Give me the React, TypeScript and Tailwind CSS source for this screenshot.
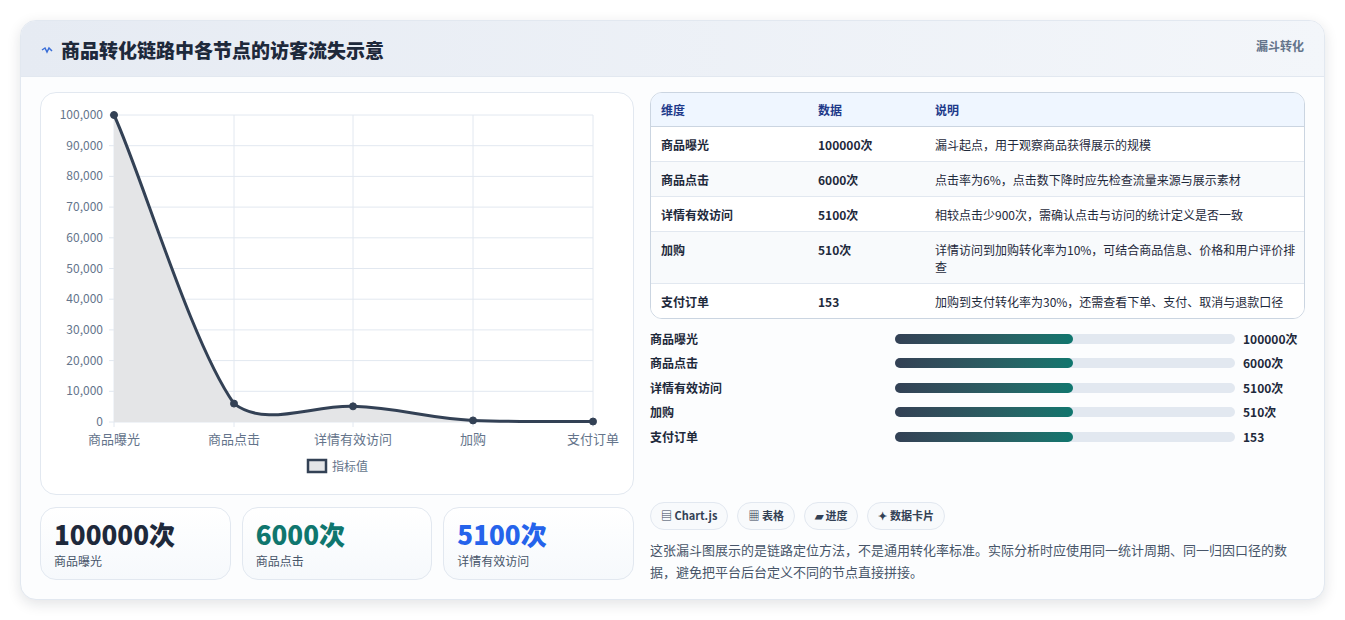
import React from 'react';

const font = { fontFamily: '"Noto Sans CJK SC", "Noto Sans", sans-serif' };

const rows = [
  { name: '商品曝光', value: '100000次', note: '漏斗起点，用于观察商品获得展示的规模' },
  { name: '商品点击', value: '6000次', note: '点击率为6%，点击数下降时应先检查流量来源与展示素材' },
  { name: '详情有效访问', value: '5100次', note: '相较点击少900次，需确认点击与访问的统计定义是否一致' },
  { name: '加购', value: '510次', note: '详情访问到加购转化率为10%，可结合商品信息、价格和用户评价排查' },
  { name: '支付订单', value: '153', note: '加购到支付转化率为30%，还需查看下单、支付、取消与退款口径' },
];

const xs = [73, 193, 312, 432, 552];
const yTicks = [100000, 90000, 80000, 70000, 60000, 50000, 40000, 30000, 20000, 10000, 0];
const yOf = (v: number) => 329 - (v / 100000) * 307;
const pts = [100000, 6000, 5100, 510, 153].map((v, i) => [xs[i], yOf(v)]);
const line =
  'M73,22 C100,80 150,250 193,310.6 C225,335 270,312 312,313.3 C360,315 385,325 432,327.4 C480,329 520,328.5 552,328.5';

function Chart() {
  return (
    <svg width="594" height="402" className="block">
      {yTicks.map((t) => (
        <g key={t}>
          <line x1="68" x2="552" y1={yOf(t)} y2={yOf(t)} stroke="#e2e8f0" />
          <text x="62" y={yOf(t) + 4} fontSize="12" fill="#64748b" textAnchor="end">
            {t.toLocaleString('en-US')}
          </text>
        </g>
      ))}
      {xs.map((x) => (
        <line key={x} x1={x} x2={x} y1="22" y2="334" stroke="#e2e8f0" />
      ))}
      <path d={line + ' L552,329 L73,329 Z'} fill="#e4e5e7" />
      <path d={line} fill="none" stroke="#334155" strokeWidth="3" />
      {pts.map(([x, y], i) => (
        <circle key={i} cx={x} cy={y} r="3.5" fill="#334155" stroke="#334155" strokeWidth="1" />
      ))}
      {['商品曝光', '商品点击', '详情有效访问', '加购', '支付订单'].map((l, i) => (
        <text key={l} x={xs[i]} y="351" fontSize="13" fill="#64748b" textAnchor="middle">
          {l}
        </text>
      ))}
      <rect x="267" y="367" width="18" height="12" fill="#e4e5e7" stroke="#334155" strokeWidth="2.5" />
      <text x="291" y="378" fontSize="12" fill="#64748b">指标值</text>
    </svg>
  );
}

export default function App() {
  return (
    <div className="w-[1345px] h-[620px] bg-white pt-[20px] pl-[20px]" style={font}>
      <div className="w-[1305px] h-[580px] rounded-2xl border border-[#e2e8f0] shadow-[0_4px_14px_rgba(15,23,42,0.12)] overflow-hidden bg-[#fcfdfe]">
        <div className="h-[56px] bg-gradient-to-r from-[#e6ebf3] to-[#f3f6fa] border-b border-[#e2e8f0] flex items-start justify-between px-[20px]">
          <div className="flex items-center gap-[8px] mt-[15px]">
            <svg width="12" height="10" viewBox="0 0 12 10">
              <path d="M1 5 L4 3 L6 7 L8 3 L11 6" fill="none" stroke="#3b6fd8" strokeWidth="1.5" />
            </svg>
            <span className="text-[19px] font-black text-[#1e293b]">商品转化链路中各节点的访客流失示意</span>
          </div>
          <span className="mt-[16px] text-[12px] font-bold text-[#64748b]">漏斗转化</span>
        </div>
        <div className="flex gap-[16px] px-[19px] pt-[15px]">
          <div className="w-[594px] flex flex-col gap-[12px]">
            <div className="h-[403px] rounded-2xl border border-[#e2e8f0] bg-white">
              <Chart />
            </div>
            <div className="grid grid-cols-3 gap-[11px]">
              {[
                ['100000次', '商品曝光', 'text-[#1e293b]'],
                ['6000次', '商品点击', 'text-[#0f766e]'],
                ['5100次', '详情有效访问', 'text-[#2563eb]'],
              ].map(([v, l, c]) => (
                <div key={l} className="h-[73px] rounded-2xl border border-[#e2e8f0] bg-gradient-to-b from-white to-[#f6f9fc] px-[13px] pt-[9px]">
                  <div className={`text-[26px] font-black leading-[34px] ${c}`}>{v}</div>
                  <div className="text-[12px] text-[#475569] mt-[1px]">{l}</div>
                </div>
              ))}
            </div>
          </div>
          <div className="flex-1 flex flex-col">
            <div className="rounded-xl border border-[#cbd5e1] overflow-hidden">
              <table className="w-full text-[12px] leading-[17px] text-[#1e293b] border-collapse">
                <thead>
                  <tr className="bg-[#eff6ff] text-[#1e3a8a] h-[33px] border-b border-[#cbd5e1]">
                    <th className="text-left font-bold pl-[10px] w-[167px]">维度</th>
                    <th className="text-left font-bold w-[117px]">数据</th>
                    <th className="text-left font-bold">说明</th>
                  </tr>
                </thead>
                <tbody>
                  {rows.map((r, i) => (
                    <tr key={r.name} className={`border-t border-[#e2e8f0] align-top ${i % 2 ? 'bg-[#f8fafc]' : 'bg-white'}`}>
                      <td className="pl-[10px] pt-[9px] pb-[8px] font-semibold">{r.name}</td>
                      <td className="pt-[9px] pb-[8px] font-semibold">{r.value}</td>
                      <td className="pt-[9px] pb-[8px] pr-[4px]">{r.note}</td>
                    </tr>
                  ))}
                </tbody>
              </table>
            </div>
            <div className="flex flex-col gap-[6.5px] mt-[11px]">
              {rows.map((r) => (
                <div key={r.name} className="flex items-center h-[18px] text-[12px] font-bold text-[#1e293b]">
                  <span className="w-[245px]">{r.name}</span>
                  <div className="w-[340px] h-[10px] rounded-full bg-[#e2e8f0]">
                    <div className="w-[178px] h-[10px] rounded-full bg-gradient-to-r from-[#334155] to-[#0f766e]" />
                  </div>
                  <span className="ml-[8px]">{r.value}</span>
                </div>
              ))}
            </div>
            <div className="flex gap-[9px] mt-[56px]">
              {['▤ Chart.js', '▦ 表格', '▰ 进度', '✦ 数据卡片'].map((c) => (
                <span key={c} className="h-[28px] px-[10px] flex items-center rounded-full border border-[#e2e8f0] bg-[#f8fafc] text-[11px] font-bold text-[#334155]">
                  {c}
                </span>
              ))}
            </div>
            <p className="mt-[9px] text-[13px] leading-[22px] text-[#475569]">
              这张漏斗图展示的是链路定位方法，不是通用转化率标准。实际分析时应使用同一统计周期、同一归因口径的数据，避免把平台后台定义不同的节点直接拼接。
            </p>
          </div>
        </div>
      </div>
    </div>
  );
}
